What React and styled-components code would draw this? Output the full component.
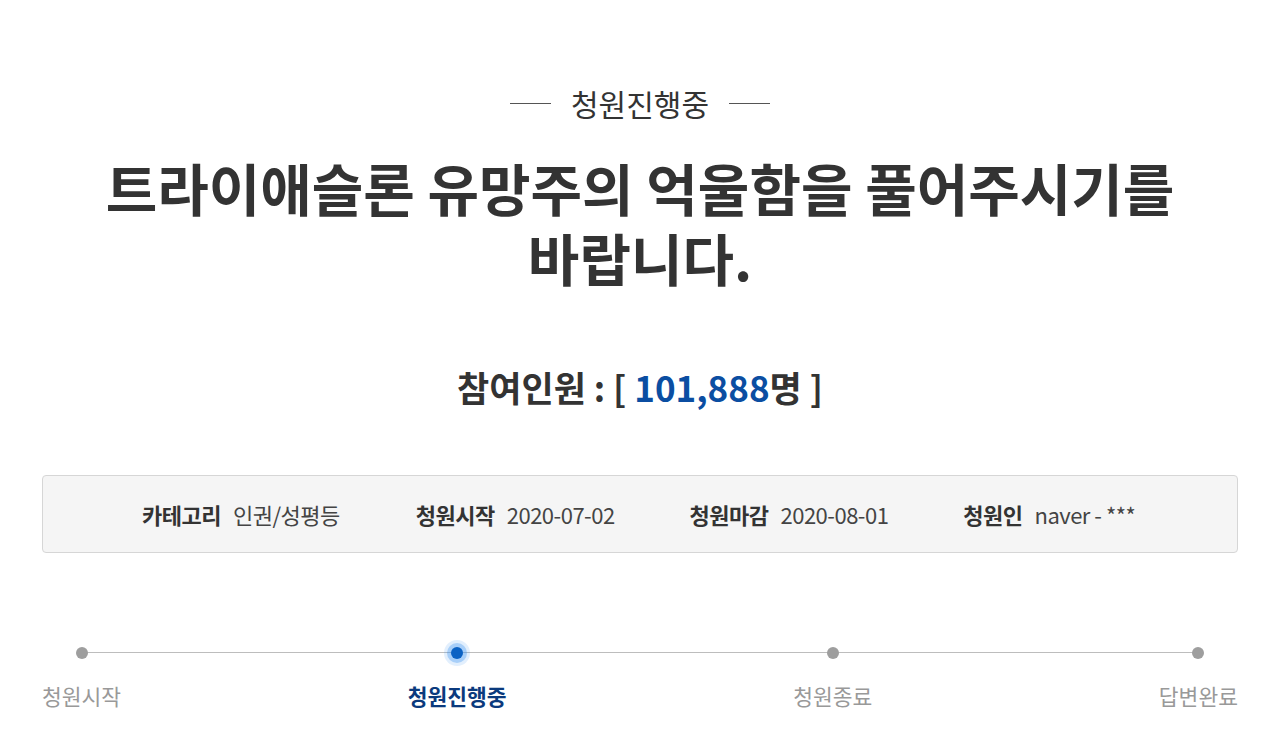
import React from 'react';
import styled, { createGlobalStyle } from 'styled-components';

const GlobalStyle = createGlobalStyle`
  body {
    margin: 0;
    background: #fff;
    font-family: "Noto Sans CJK KR", "Noto Sans", sans-serif;
    color: #333;
  }
`;

const Page = styled.div`
  width: 1196px;
  margin: 0 auto;
  padding-top: 86px;
`;

const Status = styled.div`
  display: flex;
  align-items: center;
  justify-content: center;
  gap: 20px;
  font-size: 30px;
  line-height: 34px;
  color: #333;

  &::before,
  &::after {
    content: '';
    width: 41px;
    height: 1px;
    background: #555;
  }
`;

const Title = styled.h1`
  margin: 32px 0 0;
  text-align: center;
  font-size: 56px;
  line-height: 70px;
  font-weight: 700;
  color: #333;
`;

const Counter = styled.h2`
  margin: 73px 0 0;
  text-align: center;
  font-size: 35px;
  line-height: 44px;
  font-weight: 700;
  color: #333;
`;

const Count = styled.span`
  color: #0b4ea2;
`;

const InfoBox = styled.ul`
  list-style: none;
  margin: 66px 0 0;
  padding: 0 0 0 99px;
  height: 76px;
  display: flex;
  align-items: center;
  background: #f5f5f5;
  border: 1px solid #d6d6d6;
  border-radius: 4px;
`;

const InfoItem = styled.li`
  width: 276px;
  display: flex;
  align-items: baseline;
  gap: 12px;
  font-size: 22px;
  line-height: 30px;
  letter-spacing: -0.5px;
`;

const InfoLabel = styled.strong`
  font-weight: 700;
  color: #333;
`;

const InfoValue = styled.span`
  color: #444;
`;

const Steps = styled.ol`
  list-style: none;
  position: relative;
  margin: 94px 0 0;
  padding: 0;
  display: flex;
  justify-content: space-between;

  &::before {
    content: '';
    position: absolute;
    top: 5px;
    left: 39px;
    right: 39px;
    height: 1px;
    background: #bdbdbd;
  }
`;

const Step = styled.li`
  position: relative;
  display: flex;
  flex-direction: column;
  align-items: center;
  gap: 22px;
`;

const Dot = styled.span`
  width: 12px;
  height: 12px;
  border-radius: 50%;
  background: ${(p) => (p.$active ? '#0b62c4' : '#9e9e9e')};
  box-shadow: ${(p) =>
    p.$active ? '0 0 0 4px rgba(60, 150, 240, 0.35), 0 0 0 7px rgba(60, 150, 240, 0.15)' : 'none'};
`;

const StepLabel = styled.span`
  font-size: 21.5px;
  line-height: 30px;
  font-weight: ${(p) => (p.$active ? 700 : 400)};
  color: ${(p) => (p.$active ? '#0b3a7d' : '#999')};
  white-space: nowrap;
`;

const info = [
  ['카테고리', '인권/성평등'],
  ['청원시작', '2020-07-02'],
  ['청원마감', '2020-08-01'],
  ['청원인', 'naver - ***'],
];

const steps = ['청원시작', '청원진행중', '청원종료', '답변완료'];

export default function App() {
  return (
    <>
      <GlobalStyle />
      <Page>
        <Status>청원진행중</Status>
        <Title>
          트라이애슬론 유망주의 억울함을 풀어주시기를
          <br />
          바랍니다.
        </Title>
        <Counter>
          참여인원 : [ <Count>101,888</Count>명 ]
        </Counter>
        <InfoBox>
          {info.map(([label, value]) => (
            <InfoItem key={label}>
              <InfoLabel>{label}</InfoLabel>
              <InfoValue>{value}</InfoValue>
            </InfoItem>
          ))}
        </InfoBox>
        <Steps>
          {steps.map((s, i) => (
            <Step key={s}>
              <Dot $active={i === 1} />
              <StepLabel $active={i === 1}>{s}</StepLabel>
            </Step>
          ))}
        </Steps>
      </Page>
    </>
  );
}
